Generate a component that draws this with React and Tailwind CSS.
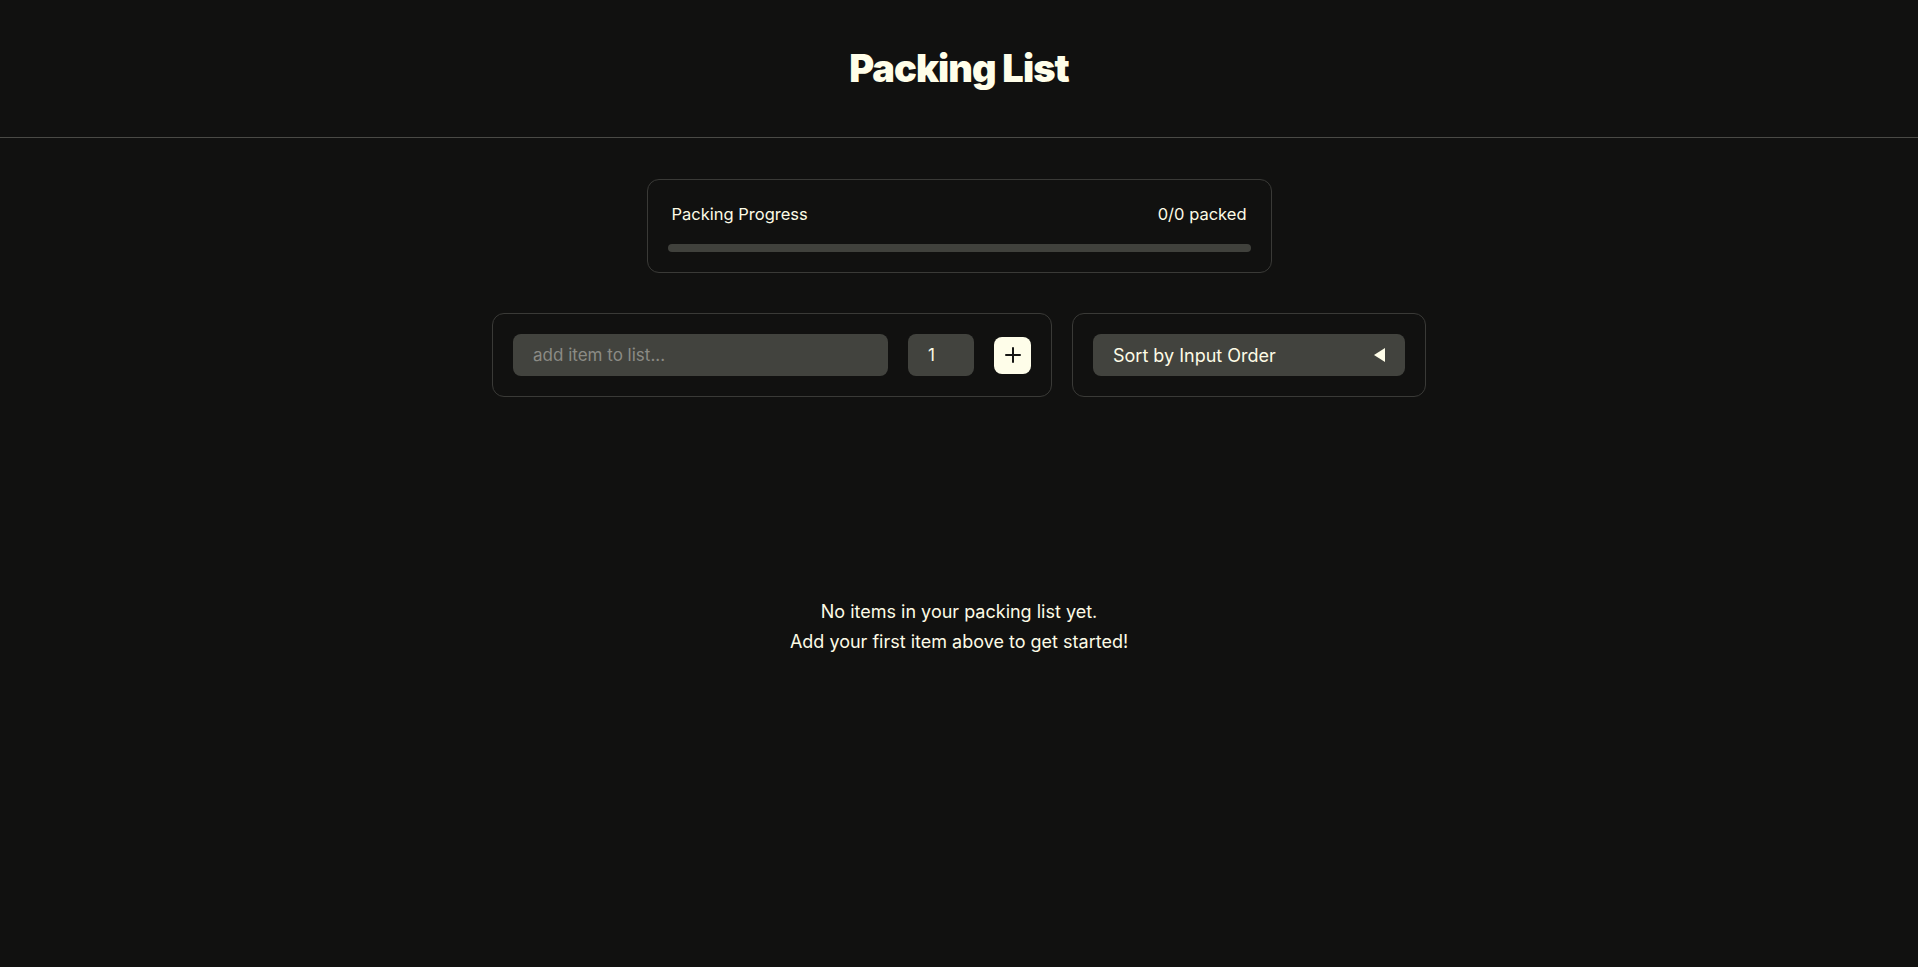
import React, { useState } from "react";
import { Plus } from "lucide-react";

const font = { fontFamily: "Inter, 'Noto Sans', sans-serif" };

const App = () => {
    const [items] = useState([]);
    const [name, setName] = useState("");
    const [qty, setQty] = useState(1);

    const packed = items.filter((i) => i.packed).length;

    return (
        <div className="min-h-screen bg-[#111110] text-[#fdfbe6]" style={font}>
            {/* Header */}
            <header className="border-b border-[#4a4a46] pt-12 pb-[49px] text-center">
                <h1 className="text-[38px] leading-10 font-black tracking-tight text-[#fffee9]">
                    Packing List
                </h1>
            </header>

            <main className="flex flex-col items-center pt-[41px]">
                {/* Progress */}
                <section className="w-[625px] rounded-xl border border-[#3a3a37] p-5">
                    <div className="flex justify-between px-1 text-[16.5px] leading-7">
                        <span>Packing Progress</span>
                        <span>
                            {packed}/{items.length} packed
                        </span>
                    </div>
                    <div className="mt-4 h-2 rounded-full bg-[#40413c]"></div>
                </section>

                {/* Controls */}
                <div className="mt-10 flex gap-5">
                    <form
                        className="flex w-[560px] items-center gap-5 rounded-xl border border-[#3a3a37] p-5"
                        onSubmit={(e) => e.preventDefault()}
                    >
                        <input
                            value={name}
                            onChange={(e) => setName(e.target.value)}
                            placeholder="add item to list..."
                            className="h-[42px] min-w-0 flex-1 rounded-lg bg-[#42433e] px-5 text-[17px] text-[#fdfbe6] outline-none placeholder:text-[#8b8b85]"
                        />
                        <input
                            value={qty}
                            onChange={(e) => setQty(e.target.value)}
                            className="h-[42px] w-[66px] rounded-lg bg-[#42433e] px-5 text-[17px] text-[#fdfbe6] outline-none"
                        />
                        <button
                            type="submit"
                            className="flex h-[37px] w-[37px] items-center justify-center rounded-lg bg-[#fefde9] text-[#151513]"
                        >
                            <Plus size={24} strokeWidth={2} />
                        </button>
                    </form>

                    <div className="w-[354px] rounded-xl border border-[#3a3a37] p-5">
                        <button className="flex h-[42px] w-full items-center justify-between rounded-lg bg-[#42433e] px-5 text-[18px] text-[#fdfbe6]">
                            <span>Sort by Input Order</span>
                            <svg width="11" height="14" viewBox="0 0 11 14">
                                <polygon points="11,0 11,14 0,7" fill="#fffee9" />
                            </svg>
                        </button>
                    </div>
                </div>

                {/* Empty state */}
                <div className="mt-[200px] text-center text-[18px] leading-[30px]">
                    <p>No items in your packing list yet.</p>
                    <p>Add your first item above to get started!</p>
                </div>
            </main>
        </div>
    );
};

export default App;
